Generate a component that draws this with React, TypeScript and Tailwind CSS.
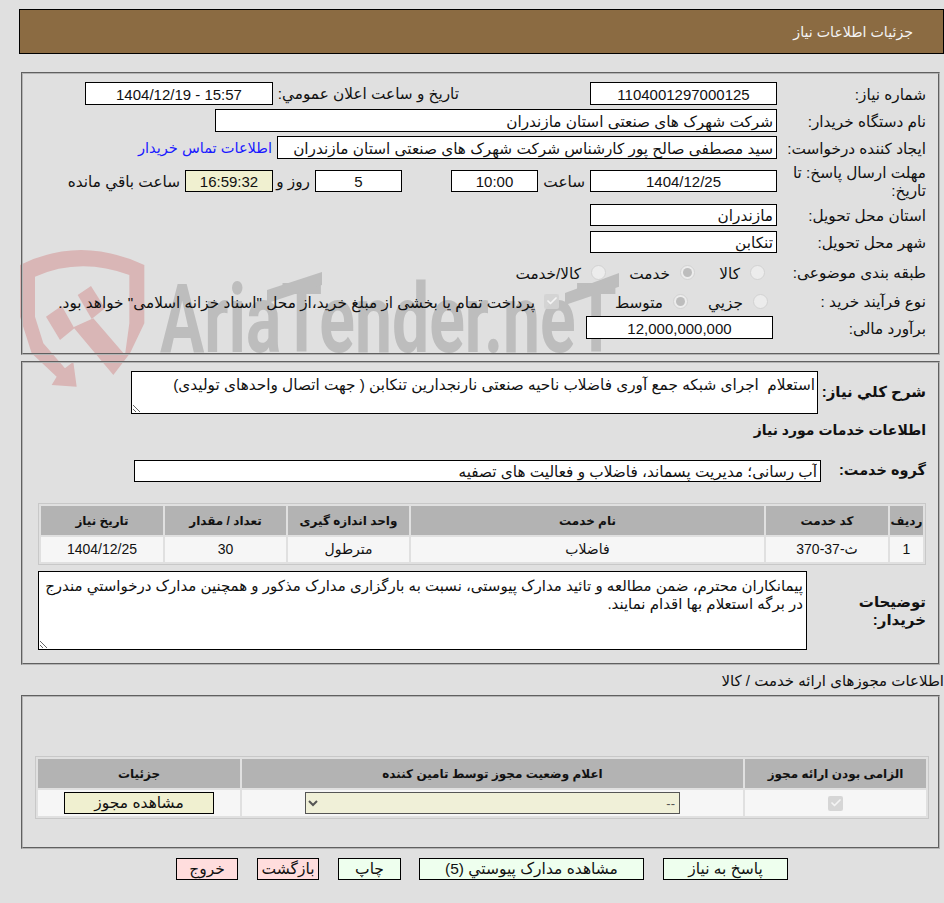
import { Check } from 'lucide-react'
import type { ReactNode } from 'react'

// Field value shown as a bordered read-only box.
function Box({ value, className, align = 'center' }: { value: string; className: string; align?: 'center' | 'right' }) {
  return (
    <input
      readOnly
      dir={align === 'center' ? 'ltr' : 'rtl'}
      value={value}
      className={`${className} ${align === 'center' ? 'text-center text-[15px]' : 'text-right'} shrink-0 border border-black bg-white px-[3px] pt-[2px] text-[#111] outline-none`}
    />
  )
}

function Radio({ checked = false }: { checked?: boolean }) {
  return (
    <span className="flex h-[15px] w-[15px] shrink-0 items-center justify-center rounded-full border border-[#d2d2d2] bg-[#ececec]">
      {checked ? <span className="h-[9px] w-[9px] rounded-full bg-[#bdbdbd]" /> : null}
    </span>
  )
}

function DisabledCheck({ className = '' }: { className?: string }) {
  return (
    <span className={`${className} flex h-[15px] w-[15px] shrink-0 items-center justify-center rounded-[2px] bg-[#d3d3d3]/90`}>
      <Check size={12} strokeWidth={3.5} color="#f4f4f4" />
    </span>
  )
}

function Row({ label, className, children }: { label: ReactNode; className: string; children?: ReactNode }) {
  return (
    <div className={`${className} flex items-center`}>
      <div className="w-[149px] shrink-0 pt-[2px] leading-[18px]">{label}</div>
      {children}
    </div>
  )
}

function ActionButton({ label, className }: { label: string; className: string }) {
  return (
    <button type="button" className={`${className} h-[22px] shrink-0 border border-black text-[15.5px] leading-[18px] text-[#111]`}>
      {label}
    </button>
  )
}

const serviceHeads = ['ردیف', 'کد خدمت', 'نام خدمت', 'واحد اندازه گیری', 'تعداد / مقدار', 'تاریخ نیاز']
const serviceCells = ['1', 'ث-37-370', 'فاضلاب', 'مترطول', '30', '1404/12/25']

function Watermark() {
  return (
    <div dir="ltr" className="pointer-events-none absolute top-[240px] left-[10px] h-[160px] w-[640px]">
      <svg width="640" height="160" viewBox="0 0 1920 480">
        <path
          fill="#d9b6b6"
          d="M30 75 Q210 -15 403 75 L403 250 L360 340 L310 405 L190 262 L250 235 L345 345 L358 250 L358 105 Q210 50 75 110 L75 230 L100 310 L165 385 L190 365 L200 440 L125 435 L140 410 L65 340 L30 230 Z"
        />
        <polygon fill="#d9b6b6" points="108,230 155,197 193,265 150,300" />
        <polygon fill="#d9b6b6" points="203,165 243,138 285,205 245,237" />
        <text
          x="450"
          y="335"
          fontFamily="Roboto"
          fontWeight="700"
          fontSize="288"
          fill="#bdbdbd"
          textLength="1370"
          lengthAdjust="spacingAndGlyphs"
        >
          AriaTender.neT
        </text>
        <polygon fill="#bdbdbd" points="771,150 771,190 936,135 936,96" />
        <polygon fill="#bdbdbd" points="1665,159 1665,195 1827,140 1827,99" />
      </svg>
    </div>
  )
}

export default function App() {
  return (
    <div
      dir="rtl"
      className="relative min-h-[903px] w-[944px] overflow-hidden bg-[#e0e0e0] pt-[9px] text-[15.3px] text-[#111] [font-family:'Liberation_Sans','DejaVu_Sans',sans-serif]"
    >
      <Watermark />

      <div className="relative">
        <div className="mr-0 ml-[19px] flex h-[45px] items-center border border-black bg-[#8b6b42] pt-[2px] pr-[30px] text-[14.2px] text-[#f4f4f4]">
          جزئیات اطلاعات نیاز
        </div>

        <div className="mt-[18px] mr-[4px] h-[283px] w-[919px] border-2 border-[#b4b4b4] pt-[8px] pr-[12px] [border-style:groove]">
          <Row label="شماره نیاز:" className="h-[23px]">
            <Box value="1104001297000125" className="h-[23px] w-[187px]" />
            <div className="mr-[131px] w-[182px] shrink-0 pt-[2px]">تاریخ و ساعت اعلان عمومي:</div>
            <Box value="1404/12/19 - 15:57" className="mr-[4px] h-[23px] w-[188px]" />
          </Row>
          <Row label="نام دستگاه خریدار:" className="mt-[4px] h-[23px]">
            <Box value="شرکت شهرک های صنعتی استان مازندران" align="right" className="h-[23px] w-[562px]" />
          </Row>
          <Row label="ایجاد کننده درخواست:" className="mt-[4px] h-[23px]">
            <Box
              value="سید مصطفی صالح پور کارشناس شرکت شهرک های صنعتی استان مازندران"
              align="right"
              className="h-[23px] w-[500px]"
            />
            <a href="#" className="mr-[5px] pt-[2px] text-[14.6px] text-[#1a1aff]">
              اطلاعات تماس خریدار
            </a>
          </Row>
          <Row label="مهلت ارسال پاسخ: تا تاریخ:" className="mt-[4px] h-[36px]">
            <Box value="1404/12/25" className="h-[22px] w-[187px]" />
            <div className="mr-[5px] w-[47px] shrink-0 pt-[2px]">ساعت</div>
            <Box value="10:00" className="h-[22px] w-[87px]" />
            <div className="w-[49px] shrink-0" />
            <Box value="5" className="h-[22px] w-[87px]" />
            <div className="mr-[5px] w-[37px] shrink-0 pt-[2px]">روز و</div>
            <Box value="16:59:32" className="h-[22px] w-[88px] !bg-[#f0f0d0]" />
            <div className="mr-[5px] shrink-0 pt-[2px]">ساعت باقي مانده</div>
          </Row>
          <Row label="استان محل تحویل:" className="mt-[5px] h-[22px]">
            <Box value="مازندران" align="right" className="h-[22px] w-[187px]" />
          </Row>
          <Row label="شهر محل تحویل:" className="mt-[5px] h-[22px]">
            <Box value="تنکابن" align="right" className="h-[22px] w-[187px]" />
          </Row>
          <Row label="طبقه بندی موضوعی:" className="mt-[5px] h-[28px]">
            <div className="mr-[12px]">
              <Radio />
            </div>
            <div className="mr-[4px] w-[43px] shrink-0 pt-[5px] pr-[6px]">کالا</div>
            <div className="mr-[8px]">
              <Radio checked />
            </div>
            <div className="mr-[10px] w-[64px] shrink-0 pt-[5px]">خدمت</div>
            <Radio />
            <div className="mr-[10px] shrink-0 pt-[5px]">کالا/خدمت</div>
          </Row>
          <Row label="نوع فرآیند خرید :" className="h-[30px]">
            <div className="mr-[9px]">
              <Radio />
            </div>
            <div className="mr-[4px] w-[61px] shrink-0 pt-[5px] pr-[6px]">جزيي</div>
            <Radio checked />
            <div className="mr-[10px] w-[104px] shrink-0 pt-[5px]">متوسط</div>
            <DisabledCheck />
            <div className="mr-[9px] shrink-0 pt-[5px]">پرداخت تمام یا بخشی از مبلغ خرید،از محل "اسناد خزانه اسلامی" خواهد بود.</div>
          </Row>
          <Row label="برآورد مالی:" className="h-[23px]">
            <Box value="12,000,000,000" className="mr-[4px] h-[23px] w-[187px]" />
          </Row>
        </div>

        <div className="mt-[6px] mr-[4px] h-[304px] w-[919px] border-2 border-[#b4b4b4] pt-[8px] pr-[12px] [border-style:groove]">
          <div className="flex h-[43px] items-center">
            <div className="w-[108px] shrink-0 text-[15px] font-bold">شرح کلي نیاز:</div>
            <textarea
              readOnly
              defaultValue="استعلام  اجرای شبکه جمع آوری فاضلاب ناحیه صنعتی نارنجدارین تنکابن ( جهت اتصال واحدهای تولیدی)"
              className="h-[43px] w-[687px] shrink-0 border border-black bg-white px-[2px] pt-[4px] leading-[18px] outline-none"
            />
          </div>
          <div className="mt-[6px] h-[20px] text-[14px] font-bold">اطلاعات خدمات مورد نیاز</div>
          <div className="mt-[20px] flex h-[22px] items-center">
            <div className="w-[105px] shrink-0 text-[14.5px] font-bold">گروه خدمت:</div>
            <Box value="آب رسانی؛ مدیریت پسماند، فاضلاب و فعالیت های تصفیه" align="right" className="h-[22px] w-[687px]" />
          </div>
          <table className="mt-[21px] w-[888px] table-fixed border-separate border-spacing-[2px] border border-[#c8c8c8] text-center">
            <colgroup>
              <col className="w-[33px]" />
              <col className="w-[122px]" />
              <col className="w-[353px]" />
              <col className="w-[121px]" />
              <col className="w-[121px]" />
              <col />
            </colgroup>
            <thead>
              <tr>
                {serviceHeads.map((h) => (
                  <th key={h} className="h-[29px] bg-[#b3b3b3] p-0 text-[12px] font-bold">
                    {h}
                  </th>
                ))}
              </tr>
            </thead>
            <tbody>
              <tr>
                {serviceCells.map((c) => (
                  <td key={c} className="h-[25px] bg-[#f6f6f6] p-0 text-[14px]">
                    {c}
                  </td>
                ))}
              </tr>
            </tbody>
          </table>
          <div className="mt-[6px] flex h-[79px] items-center">
            <div className="w-[119px] shrink-0 pl-[30px] text-[15px] leading-[18px] font-bold">توضیحات خریدار:</div>
            <textarea
              readOnly
              defaultValue="پیمانکاران محترم، ضمن مطالعه و تائید مدارک پیوستی، نسبت به بارگزاری مدارک مذکور و همچنین مدارک درخواستي مندرج در برگه استعلام بها اقدام نمایند."
              className="h-[79px] w-[769px] shrink-0 border border-black bg-white px-[3px] pt-[5px] text-[15px] leading-[18px] outline-none"
            />
          </div>
        </div>

        <div className="mt-[7px] h-[21px] text-[15px] leading-[18px]">اطلاعات مجوزهای ارائه خدمت / کالا</div>

        <div className="mt-[2px] mr-[4px] h-[154px] w-[919px] border-2 border-[#b4b4b4] pt-[59px] [border-style:groove]">
          <table className="mr-[9px] w-[894px] table-fixed border-separate border-spacing-[2px] border border-[#c8c8c8] text-center">
            <colgroup>
              <col className="w-[181px]" />
              <col className="w-[501px]" />
              <col />
            </colgroup>
            <thead>
              <tr>
                <th className="h-[29px] bg-[#b3b3b3] p-0 text-[12px] font-bold">الزامی بودن ارائه مجوز</th>
                <th className="h-[29px] bg-[#b3b3b3] p-0 text-[12px] font-bold">اعلام وضعیت مجوز توسط تامین کننده</th>
                <th className="h-[29px] bg-[#b3b3b3] p-0 text-[12px] font-bold">جزئیات</th>
              </tr>
            </thead>
            <tbody>
              <tr>
                <td className="h-[26px] bg-[#f6f6f6] p-0">
                  <div className="flex justify-center">
                    <DisabledCheck />
                  </div>
                </td>
                <td className="h-[26px] bg-[#f6f6f6] p-0">
                  <div className="flex justify-center">
                    <select
                      disabled
                      defaultValue="--"
                      className="h-[22px] w-[375px] rounded-none border border-[#555] bg-[#f0f0d8] text-[13px] text-[#555] opacity-100"
                    >
                      <option value="--">--</option>
                    </select>
                  </div>
                </td>
                <td className="h-[26px] bg-[#f6f6f6] p-0">
                  <div className="flex justify-center">
                    <ActionButton label="مشاهده مجوز" className="w-[150px] bg-[#f0f0d0]" />
                  </div>
                </td>
              </tr>
            </tbody>
          </table>
        </div>

        <div className="mt-[9px] flex gap-[19px] pr-[156px]">
          <ActionButton label="پاسخ به نیاز" className="w-[125px] bg-[#eeffee]" />
          <ActionButton label="مشاهده مدارک پیوستي (5)" className="w-[225px] bg-[#eeffee]" />
          <ActionButton label="چاپ" className="-mr-[1px] w-[63px] bg-[#eeffee]" />
          <ActionButton label="بازگشت" className="w-[62px] bg-[#ffdddd]" />
          <ActionButton label="خروج" className="w-[62px] bg-[#ffdddd]" />
        </div>
      </div>
    </div>
  )
}
